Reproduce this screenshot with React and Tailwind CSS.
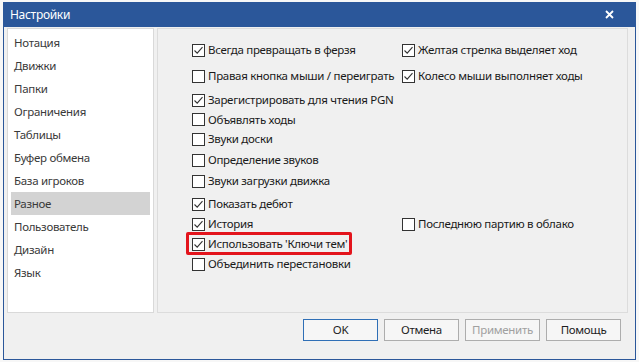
const NAV = [
  'Нотация', 'Движки', 'Папки', 'Ограничения', 'Таблицы', 'Буфер обмена',
  'База игроков', 'Разное', 'Пользователь', 'Дизайн', 'Язык',
]

// spacing in the options panel is irregular, so each row carries its own offset
const ROWS = [
  { cls: 'mt-[11px] h-[20px]', left: ['Всегда превращать в ферзя', true], right: ['Желтая стрелка выделяет ход', true] },
  { cls: 'mt-[6px] h-[20px]', left: ['Правая кнопка мыши / переиграть', false], right: ['Колесо мыши выполняет ходы', true] },
  { cls: 'mt-[4px] h-[20px]', left: ['Зарегистрировать для чтения PGN', true] },
  { cls: 'mt-0 h-[19px]', left: ['Объявлять ходы', false] },
  { cls: 'mt-0 h-[20px]', left: ['Звуки доски', false] },
  { cls: 'mt-px h-[20px]', left: ['Определение звуков', false] },
  { cls: 'mt-px h-[20px]', left: ['Звуки загрузки движка', false] },
  { cls: 'mt-[3px] h-[20px]', left: ['Показать дебют', true] },
  { cls: 'mt-0 h-[20px]', left: ['История', true], right: ['Последнюю партию в облако', false] },
  { cls: 'mt-0 h-[20px]', left: ["Использовать 'Ключи тем'", true], marked: true },
  { cls: 'mt-0 h-[20px]', left: ['Объединить перестановки', false] },
]

function Box({ checked }) {
  return (
    <span className="w-[13px] h-[13px] border border-[#333] bg-white flex items-center justify-center shrink-0">
      {checked && (
        <svg width="11" height="11" viewBox="0 0 11 11">
          <path d="M1.5 5.5 L4.2 8.2 L9.5 2.2" fill="none" stroke="#333" strokeWidth="1.1" />
        </svg>
      )}
    </span>
  )
}

function Option({ label, checked, marked }) {
  return (
    <label className="relative inline-flex items-center gap-[3px] h-full">
      <Box checked={checked} />
      <span className="whitespace-nowrap">{label}</span>
      {marked && (
        <span className="absolute left-[-6px] right-[-5px] top-[-2px] bottom-[-1px] border-[3px] border-[#e3141c] rounded-[2px]" />
      )}
    </label>
  )
}

function Button({ children, primary, disabled }) {
  return (
    <button
      className={
        'w-[75px] h-[22px] bg-[#f6f6f6] text-[11.5px] tracking-[-0.3px] border ' +
        (primary ? 'border-[#2f6fb6] ' : 'border-[#adadad] ') +
        (disabled ? 'text-[#a0a0a0]' : 'text-[#1e1e1e]')
      }
    >
      {children}
    </button>
  )
}

export default function App() {
  return (
    <div
      className="w-[639px] h-[362px] bg-[#f7f7f7] pt-[2px] pl-[3px] overflow-hidden"
      style={{ fontFamily: '"Noto Sans", "Open Sans", sans-serif' }}
    >
      <div className="w-[633px] h-[358px] border border-t-0 border-[#2b579a] flex flex-col bg-[#f0f0f0]">
        {/* Title bar */}
        <div className="h-[25px] bg-[#2b579a] flex items-center justify-between pl-[6px] pr-[21px] shrink-0">
          <span className="text-white text-[12px] tracking-[-0.3px]">Настройки</span>
          <svg width="9" height="9" viewBox="0 0 9 9">
            <path d="M1 1 L8 8 M8 1 L1 8" stroke="white" strokeWidth="1.8" />
          </svg>
        </div>

        <div className="flex pt-px pl-[3px] gap-[3px]">
          {/* Category list */}
          <div className="w-[147px] h-[285px] bg-white border border-[#d9d9d9] pt-[2px] px-[3px]">
            {NAV.map(n => (
              <div
                key={n}
                className={
                  'h-[23px] flex items-center pl-[3px] text-[11.5px] tracking-[-0.3px] text-[#3a3a3a] ' +
                  (n === 'Разное' ? 'bg-[#d3d3d3]' : '')
                }
              >
                {n}
              </div>
            ))}
          </div>

          {/* Options */}
          <div className="w-[471px] h-[285px] border border-[#dcdcdc] pl-[34px] text-[11.5px] tracking-[-0.3px] text-[#1a1a1a]">
            {ROWS.map((r, i) => (
              <div key={i} className={'flex items-center ' + r.cls}>
                <div className="w-[210px] h-full flex items-center">
                  <Option label={r.left[0]} checked={r.left[1]} marked={r.marked} />
                </div>
                {r.right && (
                  <div className="h-full flex items-center">
                    <Option label={r.right[0]} checked={r.right[1]} />
                  </div>
                )}
              </div>
            ))}
          </div>
        </div>

        {/* Buttons */}
        <div className="flex justify-end gap-[6px] pr-[14px] mt-[6px]">
          <Button primary>OK</Button>
          <Button>Отмена</Button>
          <Button disabled>Применить</Button>
          <Button>Помощь</Button>
        </div>
      </div>
    </div>
  )
}
